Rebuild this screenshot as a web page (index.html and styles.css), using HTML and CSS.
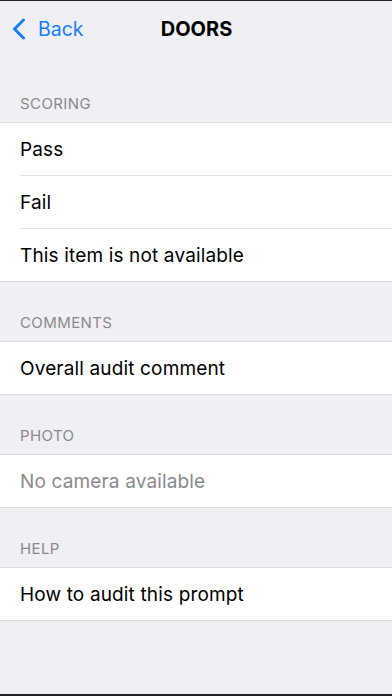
FILE: index.html
```html
<!DOCTYPE html>
<html lang="en">
<head>
    <meta charset="UTF-8">
    <meta name="viewport" content="width=device-width, initial-scale=1.0">
    <title>DOORS</title>
    <link rel="stylesheet" href="styles.css">
</head>
<body>
<div class="screen">
    <div class="navbar">
        <a class="back" href="#">
            <svg class="chevron" viewBox="0 0 14 22">
                <polyline points="11.5 2, 2.5 11, 11.5 20"/>
            </svg>
            Back
        </a>
        <div class="title">DOORS</div>
    </div>

    <div class="section first">
        <div class="section-header">SCORING</div>
        <div class="group">
            <div class="cell">Pass</div>
            <div class="cell">Fail</div>
            <div class="cell">This item is not available</div>
        </div>
    </div>

    <div class="section">
        <div class="section-header">COMMENTS</div>
        <div class="group">
            <div class="cell">Overall audit comment</div>
        </div>
    </div>

    <div class="section">
        <div class="section-header">PHOTO</div>
        <div class="group">
            <div class="cell disabled">No camera available</div>
        </div>
    </div>

    <div class="section">
        <div class="section-header">HELP</div>
        <div class="group">
            <div class="cell">How to audit this prompt</div>
        </div>
    </div>
</div>
</body>
</html>
```

FILE: styles.css
```css
html, body {
    margin: 0;
    height: 100%;
}

body {
    background-color: #efeff4;
    font-family: Inter, "Liberation Sans", Arial, sans-serif;
    color: #000;
}

.screen {
    height: 100%;
    box-sizing: border-box;
    border-top: 1px solid #222;
    border-bottom: 2px solid #222;
}

.navbar {
    height: 55px;
    display: flex;
    align-items: center;
    justify-content: center;
    position: relative;
}

.back {
    position: absolute;
    left: 12px;
    top: 16px;
    display: flex;
    align-items: center;
    gap: 12px;
    color: #157efb;
    font-size: 19.5px;
    text-decoration: none;
}

.chevron {
    width: 14px;
    height: 22px;
}
.chevron polyline {
    fill: none;
    stroke: #157efb;
    stroke-width: 3px;
    stroke-linecap: round;
    stroke-linejoin: round;
}

.title {
    font-size: 20px;
    font-weight: 700;
    padding-left: 1px;
}

.section {
    padding-top: 32px;
}
.section.first {
    padding-top: 39px;
}

.section-header {
    padding: 0 20px 9px;
    font-size: 15px;
    letter-spacing: 0.4px;
    color: #8a8a8e;
    line-height: 18px;
}

.group {
    background-color: #fff;
    border-top: 1px solid #dddde1;
    border-bottom: 1px solid #dddde1;
}

.cell {
    height: 52px;
    line-height: 54px;
    padding-left: 20px;
    font-size: 19px;
    letter-spacing: 0.15px;
}

.cell + .cell {
    border-top: 1px solid #e2e2e5;
    margin-left: 20px;
    padding-left: 0;
}

.cell.disabled {
    color: #8a8a8e;
}
```
